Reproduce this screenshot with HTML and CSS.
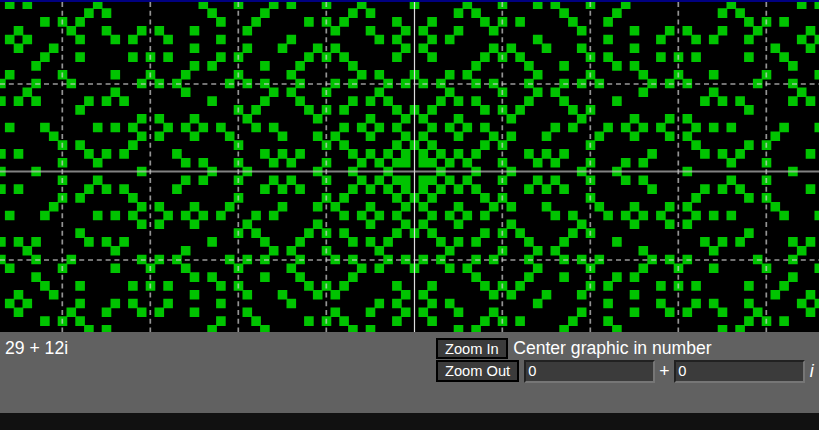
FILE: index.html
```html
<!DOCTYPE html>
<html lang="en">
<head>
    <meta charset="UTF-8">
    <meta name="viewport" content="width=device-width, initial-scale=1.0">
    <title>Gaussian Primes</title>
    <link rel="stylesheet" href="styles.css">
</head>
<body>
    <canvas id="plot" class="plot" width="819" height="330"></canvas>
    <div class="panel">
        <div class="readout">29 + 12i</div>
        <div class="controls">
            <button class="zoom-button">Zoom In</button>
            <div class="center-label">Center graphic in number</div>
            <button class="zoom-button">Zoom Out</button>
            <div class="center-inputs">
                <input type="text" class="number-input" value="0">
                <span class="plus">+</span>
                <input type="text" class="number-input" value="0">
                <span class="imag">i</span>
            </div>
        </div>
    </div>
    <script src="script.js"></script>
</body>
</html>
```

FILE: styles.css
```css
html, body {
    height: 100%;
}
body {
    font-family: "Liberation Sans", Arial, sans-serif;
    margin: 0;
    padding: 0;
    background-color: #111;
    color: #fff;
    overflow: hidden;
}
.plot {
    display: block;
    border-top: 2px solid #000080;
    background: #000;
}
.panel {
    display: grid;
    grid-template-columns: 436px 1fr;
    height: 81px;
    background-color: #616161;
}
.readout {
    padding: 6px 0 0 5px;
    font-size: 17.6px;
    line-height: 20px;
}
.controls {
    display: grid;
    grid-template-columns: max-content 1fr;
    grid-template-rows: 21px 22px;
    row-gap: 1px;
    column-gap: 5px;
    align-self: start;
    margin-top: 6px;
}
.zoom-button {
    font-family: inherit;
    font-size: 14.67px;
    line-height: 16px;
    padding: 0 7px;
    color: #fff;
    background-color: #3b3b3b;
    border: 2px solid #000;
    justify-self: start;
    white-space: nowrap;
}
.center-label {
    font-size: 17.6px;
    line-height: 20px;
    margin-left: -11px;
}
.center-inputs {
    display: flex;
    align-items: flex-start;
}
.number-input {
    box-sizing: border-box;
    width: 130.5px;
    height: 23px;
    padding: 0 2px 2px;
    font-family: inherit;
    font-size: 14.67px;
    color: #fff;
    background-color: #3b3b3b;
    border: 2px inset #767676;
}
.plus {
    width: 19.5px;
    text-align: center;
    font-size: 17.6px;
    line-height: 22px;
}
.imag {
    margin-left: 5px;
    font-size: 17.6px;
    line-height: 22px;
    font-style: italic;
}
```

FILE: script.js
```js
const canvas = document.getElementById('plot');
const ctx = canvas.getContext('2d');

const scale = 8.8;      // pixels per unit
const originX = 414.5;
const originY = 169.5;

function isPrime(n) {
    if (n < 2) return false;
    for (let d = 2; d * d <= n; d++) {
        if (n % d === 0) return false;
    }
    return true;
}

function isGaussianPrime(a, b) {
    if (a === 0) return Math.abs(b) % 4 === 3 && isPrime(Math.abs(b));
    if (b === 0) return Math.abs(a) % 4 === 3 && isPrime(Math.abs(a));
    return isPrime(a * a + b * b);
}

// Primes, slightly blurred so the edges go soft
const size = 9.6;
ctx.fillStyle = '#00c400';
ctx.filter = 'blur(0.4px)';
ctx.beginPath();
for (let a = -48; a <= 48; a++) {
    for (let b = -22; b <= 22; b++) {
        if (!isGaussianPrime(a, b)) continue;
        const x = originX + a * scale - size / 2;
        const y = originY - b * scale - size / 2;
        ctx.rect(x, y, size, size);
    }
}
ctx.fill('nonzero');
ctx.filter = 'none';

// Grid every 10 units
ctx.strokeStyle = 'rgba(210, 210, 210, 0.7)';
ctx.lineWidth = 1.7;
ctx.setLineDash([5, 3.8]);
for (let k = -4; k <= 4; k++) {
    if (k === 0) continue;
    const x = originX + k * 10 * scale;
    ctx.beginPath();
    ctx.moveTo(x - 0.2, 0);
    ctx.lineTo(x - 0.2, canvas.height);
    ctx.stroke();
}
ctx.strokeStyle = 'rgba(210, 210, 210, 0.55)';
ctx.lineWidth = 2;
for (let k = -2; k <= 2; k++) {
    if (k === 0) continue;
    const y = Math.round(originY + k * 10 * scale);
    ctx.beginPath();
    ctx.moveTo(0, y);
    ctx.lineTo(canvas.width, y);
    ctx.stroke();
}

// Axes
ctx.setLineDash([]);
ctx.strokeStyle = '#ddd';
ctx.lineWidth = 1.2;
ctx.beginPath();
ctx.moveTo(originX, 0);
ctx.lineTo(originX, canvas.height);
ctx.stroke();
ctx.strokeStyle = 'rgba(200, 200, 200, 0.65)';
ctx.lineWidth = 2;
ctx.beginPath();
ctx.moveTo(0, originY);
ctx.lineTo(canvas.width, originY);
ctx.stroke();
```
